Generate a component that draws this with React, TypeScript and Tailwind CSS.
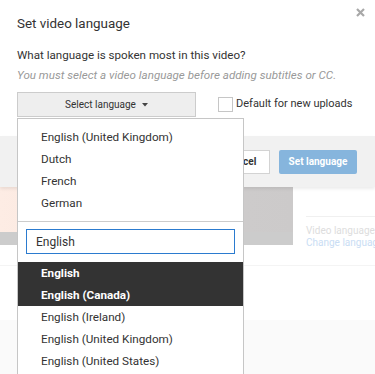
import React from "react";

const font = { fontFamily: "Roboto, 'Liberation Sans', Arial, sans-serif" };

export default function App() {
  const top = ["English (United Kingdom)", "Dutch", "French", "German"];
  const results = [
    { t: "English", h: true },
    { t: "English (Canada)", h: true },
    { t: "English (Ireland)", h: false },
    { t: "English (United Kingdom)", h: false },
    { t: "English (United States)", h: false },
  ];
  return (
    <div
      className="relative w-[375px] h-[374px] overflow-hidden bg-white text-[#333]"
      style={font}
    >
      {/* Modal body */}
      <div className="relative flex flex-col px-[17px] pt-[14px] h-[136px] bg-white">
        <div className="h-[20px] leading-[20px] text-[13.4px] text-[#333] whitespace-nowrap">Set video language</div>
        <div className="mt-[11px] h-[20px] leading-[20px] text-[11.6px] text-[#333] whitespace-nowrap">
          What language is spoken most in this video?
        </div>
        <div className="h-[20px] leading-[20px] text-[11.6px] italic text-[#999] whitespace-nowrap">
          You must select a video language before adding subtitles or CC.
        </div>
        <div className="mt-[7px] flex items-center">
          <div className="flex items-center justify-center gap-[6px] w-[179px] h-[25px] border border-[#cccccc] bg-[#eeeeee] text-[10px] text-[#333]">
            <span>Select language</span>
            <svg width="6" height="4" viewBox="0 0 6 4">
              <path d="M0 0 L6 0 L3 3.5 Z" fill="#444" />
            </svg>
          </div>
          <div className="ml-[22px] flex items-center gap-[3px]">
            <div className="w-[15px] h-[15px] border border-[#c6c6c6] bg-white" />
            <span className="text-[11px] text-[#333] whitespace-nowrap">Default for new uploads</span>
          </div>
        </div>
        <svg
          className="absolute right-[10px] top-[8px]"
          width="9"
          height="9"
          viewBox="0 0 9 9"
        >
          <path d="M1 1 L8 8 M8 1 L1 8" stroke="#a8a8a8" strokeWidth="2.2" />
        </svg>
      </div>

      {/* Modal footer */}
      <div className="relative z-10 flex items-center justify-end gap-[9px] pr-[18px] h-[51px] bg-[#f1f1f1] shadow-[0_2px_3px_rgba(0,0,0,0.08)]">
        <div className="flex items-center justify-center w-[58px] h-[24px] border border-[#d3d3d3] bg-white text-[10px] font-bold text-[#333]">
          Cancel
        </div>
        <div className="flex items-center justify-center w-[78px] h-[24px] rounded-[2px] bg-[#86b5dd] text-[10px] font-bold text-white">
          Set language
        </div>
      </div>

      {/* Faded page behind */}
      <div className="flex h-[78px]">
        <div className="flex flex-col w-[293px] shrink-0">
          <div className="h-[45px] bg-[linear-gradient(90deg,#fdece4_0%,#fbe9e1_20%,#d6cfcd_75%,#cdcbcb_84%,#cccaca_100%)]" />
          <div className="h-[13px] bg-[#cccccc]" />
        </div>
        <div className="flex flex-col ml-[13px] flex-1 min-w-0">
          <div className="mt-[29px] h-px bg-[#f0f0f0]" />
          <div className="mt-[8px] leading-[12px] text-[10px] text-[#dddddd] whitespace-nowrap">Video language</div>
          <div className="leading-[12px] text-[10px] text-[#c9ddf4] whitespace-nowrap">Change language</div>
        </div>
      </div>
      <div className="h-px bg-[#f4f4f4]" />
      <div className="h-[54px] bg-white" />
      <div className="h-[60px] bg-[#fafafa]" />

      {/* Dropdown */}
      <div className="absolute z-20 left-[17px] top-[118px] bottom-0 w-[227px] bg-white border border-b-0 border-[#c6c6c6] flex flex-col">
        <div className="pt-[7px] pb-[7px]">
          {top.map((t) => (
            <div key={t} className="h-[22px] leading-[22px] pl-[23px] text-[11.7px] text-[#333]">
              {t}
            </div>
          ))}
        </div>
        <div className="h-px bg-[#cccccc]" />
        <div className="px-[8px] pt-[7px] pb-[8px]">
          <div className="h-[25px] border border-[#2b7bcf] flex items-center pl-[9px] text-[12px] text-[#333]">
            English
          </div>
        </div>
        <div>
          {results.map((r) => (
            <div
              key={r.t}
              className={
                r.h
                  ? "h-[22px] leading-[22px] pl-[23px] text-[11.7px] font-bold text-white bg-[#333333]"
                  : "h-[22px] leading-[22px] pl-[23px] text-[11.7px] text-[#333]"
              }
            >
              {r.t}
            </div>
          ))}
        </div>
      </div>
    </div>
  );
}
